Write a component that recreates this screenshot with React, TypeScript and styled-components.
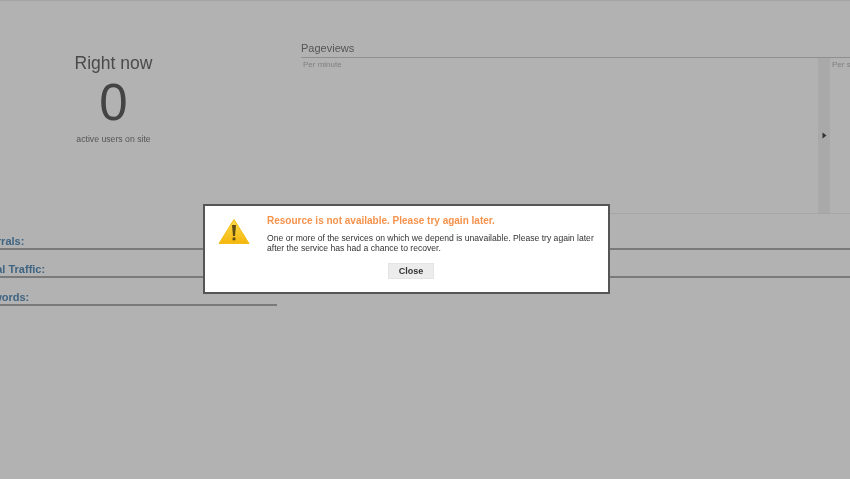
import React from "react";
import styled, {createGlobalStyle} from "styled-components";

const GlobalStyle = createGlobalStyle`
	html, body {
		margin: 0;
		padding: 0;
		overflow: hidden;
		background: #b2b2b2;
		font-family: "Liberation Sans", Arial, sans-serif;
	}
`;

const Page = styled.div`
	position: relative;
	width: 850px;
	height: 479px;
	overflow: hidden;
	box-sizing: border-box;
	background: #b2b2b2;
	border-top: 1px solid #a4a4a4;
	filter: blur(0.35px);
`;

const Top = styled.div`
	display: flex;
	height: 213px;
`;

const RightNow = styled.div`
	flex: none;
	width: 227px;
	padding-top: 52px;
	box-sizing: border-box;
	display: flex;
	flex-direction: column;
	align-items: center;
	color: #4a4a4a;
`;

const RightNowTitle = styled.div`
	font-size: 17.5px;
	line-height: 20px;
`;

const RightNowCount = styled.div`
	font-size: 51px;
	line-height: 56px;
	margin-top: 2px;
	color: #444;
`;

const RightNowLabel = styled.div`
	font-size: 8.7px;
	line-height: 12px;
	margin-top: 2px;
	color: #555;
`;

const Charts = styled.div`
	flex: 1;
	min-width: 0;
	margin-left: 74px;
	padding-top: 40px;
	display: flex;
	flex-direction: column;
`;

const ChartsTitle = styled.div`
	font-size: 11px;
	line-height: 14px;
	color: #555;
	border-bottom: 1px solid #8f8f8f;
	padding-bottom: 2px;
`;

const ChartsBody = styled.div`
	flex: 1;
	display: flex;
	border-bottom: 1px solid #a6a6a6;
`;

const ChartPane = styled.div<{$width?: number}>`
	${p => p.$width ? `flex: none; width: ${p.$width}px;` : "flex: 1; min-width: 0;"}
	box-sizing: border-box;
	padding: 2px 0 0 2px;
	font-size: 8px;
	line-height: 10px;
	color: #808080;
	white-space: nowrap;
	overflow: hidden;
`;

const Collapse = styled.div`
	flex: none;
	width: 12px;
	background: #a9a9a9;
	display: flex;
	align-items: center;
	justify-content: center;
	svg {
		display: block;
	}
`;

const Sections = styled.div`
	display: flex;
	flex-direction: column;
	margin-left: -27px;
	padding-top: 8px;
`;

const Section = styled.div<{$width: number}>`
	width: ${p => p.$width}px;
	height: 28px;
	box-sizing: border-box;
	border-bottom: 2px solid #7a7a7a;
	font-size: 11px;
	font-weight: bold;
	line-height: 14px;
	color: #3f6482;
	white-space: nowrap;
	display: flex;
	align-items: flex-end;
`;

const Modal = styled.div`
	position: absolute;
	left: 203px;
	top: 203px;
	width: 407px;
	height: 90px;
	box-sizing: border-box;
	background: #fff;
	border: 2px solid #555;
	display: flex;
	padding: 9px 14px 0 13px;
`;

const ModalIcon = styled.div`
	width: 49px;
	flex: none;
	padding-top: 3px;
	svg {
		display: block;
	}
`;

const ModalBody = styled.div`
	flex: 1;
	display: flex;
	flex-direction: column;
`;

const ModalTitle = styled.div`
	font-size: 10px;
	line-height: 12px;
	font-weight: bold;
	color: #f6924c;
`;

const ModalText = styled.div`
	margin-top: 6px;
	font-size: 8.6px;
	line-height: 10px;
	color: #333;
`;

const CloseButton = styled.button`
	align-self: center;
	margin: 10px 0 0 -39px;
	width: 46px;
	height: 16px;
	padding: 0;
	border: 1px solid #e4e4e4;
	background: #ececec;
	font-family: inherit;
	font-size: 9px;
	font-weight: bold;
	color: #333;
`;

export default function App() {
	return (
		<Page>
			<GlobalStyle/>
			<Top>
				<RightNow>
					<RightNowTitle>Right now</RightNowTitle>
					<RightNowCount>0</RightNowCount>
					<RightNowLabel>active users on site</RightNowLabel>
				</RightNow>
				<Charts>
					<ChartsTitle>Pageviews</ChartsTitle>
					<ChartsBody>
						<ChartPane $width={517}>Per minute</ChartPane>
						<Collapse>
							<svg width="5" height="7" viewBox="0 0 5 7">
								<path d="M0.5 0.5 L4.5 3.5 L0.5 6.5 Z" fill="#333"/>
							</svg>
						</Collapse>
						<ChartPane>Per second</ChartPane>
					</ChartsBody>
				</Charts>
			</Top>
			<Sections>
				<Section $width={877}>Referrals:</Section>
				<Section $width={877}>Social Traffic:</Section>
				<Section $width={304}>Keywords:</Section>
			</Sections>
			<Modal>
				<ModalIcon>
					<svg width="32" height="27" viewBox="0 0 32 27">
						<defs>
							<linearGradient id="warnFill" x1="0" y1="0" x2="0" y2="1">
								<stop offset="0" stopColor="#fbdc4a"/>
								<stop offset="1" stopColor="#f5b60f"/>
							</linearGradient>
						</defs>
						<path d="M16 1.5 L31 25.5 L1 25.5 Z" fill="url(#warnFill)" stroke="#f4bc14" strokeLinejoin="round"/>
						<path d="M14 7 H18 L17 18 H15 Z" fill="#5f4c14"/>
						<rect x="14.6" y="19.5" width="2.8" height="2.8" fill="#5f4c14"/>
					</svg>
				</ModalIcon>
				<ModalBody>
					<ModalTitle>Resource is not available. Please try again later.</ModalTitle>
					<ModalText>
						One or more of the services on which we depend is unavailable. Please try again later<br/>
						after the service has had a chance to recover.
					</ModalText>
					<CloseButton>Close</CloseButton>
				</ModalBody>
			</Modal>
		</Page>
	);
}
